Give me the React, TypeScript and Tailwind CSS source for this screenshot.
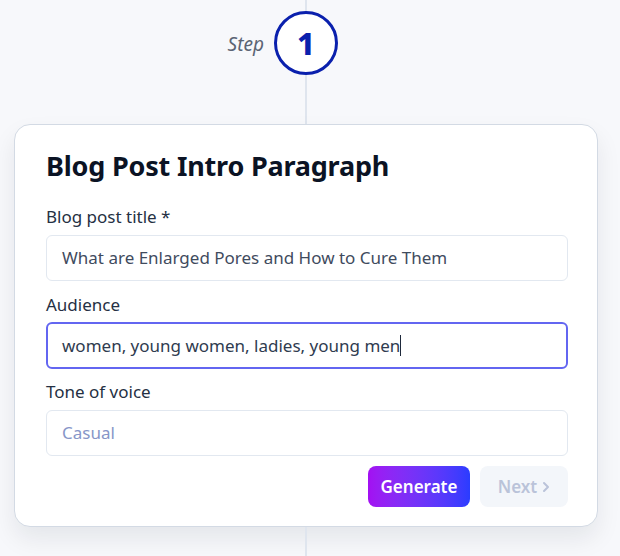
import React from "react";

export default function App() {
  const font = { fontFamily: '"Noto Sans", "Open Sans", sans-serif' };
  return (
    <div className="min-h-[556px] w-[620px] bg-[#f7f8fb] pl-[14px] pr-[22px] flex flex-col items-center" style={font}>
      <div className="flex flex-col items-center">
        <div className="w-[2px] h-[11px] bg-[#dfe5ee]" />
        <div className="relative w-[64px] h-[64px] rounded-full border-[3px] border-[#0a20ad] bg-white flex items-center justify-center">
          <span className="text-[31px] font-extrabold text-[#0a20ad] leading-none">1</span>
          <span className="absolute right-full mr-[13px] top-[18px] italic text-[19px] leading-[24px] text-[#5b6474]">Step</span>
        </div>
        <div className="w-[2px] h-[49px] bg-[#dfe5ee]" />
      </div>
      <div className="w-[584px] bg-white border border-[#d3dae4] rounded-[16px] shadow-[0_12px_24px_rgba(15,23,42,0.08)] pt-[23px] pb-[19px] pl-[31px] pr-[29px]">
        <h1 className="text-[27px] leading-[36px] font-bold text-[#0b1324] tracking-[-0.2px]">Blog Post Intro Paragraph</h1>
        <div className="mt-[21px] flex flex-col">
          <label className="text-[17px] leading-[24px] text-[#253043]">Blog post title *</label>
          <div className="mt-[6px] h-[46px] border border-[#e2e8f0] rounded-[6px] px-[15px] flex items-center text-[17px] text-[#3f4b5e]">
            What are Enlarged Pores and How to Cure Them
          </div>
          <label className="mt-[12px] text-[17px] leading-[24px] text-[#253043]">Audience</label>
          <div className="mt-[5px] h-[47px] border-2 border-[#6366f1] rounded-[6px] px-[14px] flex items-center text-[17px] text-[#2f3b4f]">
            women, young women, ladies, young men<span className="inline-block w-[1px] h-[21px] bg-[#1e293b]" />
          </div>
          <label className="mt-[11px] text-[17px] leading-[24px] text-[#253043]">Tone of voice</label>
          <div className="mt-[6px] h-[46px] border border-[#e2e8f0] rounded-[6px] px-[15px] flex items-center text-[17px] text-[#8796c8]">
            Casual
          </div>
          <div className="mt-[10px] flex justify-end gap-[10px]">
            <button className="w-[102px] h-[41px] rounded-[8px] bg-gradient-to-r from-[#a30ff2] to-[#2a3cff] text-white font-semibold text-[17px]">
              Generate
            </button>
            <button className="w-[88px] h-[41px] rounded-[8px] bg-[#f3f6fa] text-[#bac3d9] font-semibold text-[17px] flex items-center justify-center gap-[5px]">
              Next
              <svg width="8" height="12" viewBox="0 0 8 12" fill="none" stroke="#bac3d9" strokeWidth="2" strokeLinecap="round" strokeLinejoin="round">
                <path d="M2 2l4 4-4 4" />
              </svg>
            </button>
          </div>
        </div>
      </div>
      <div className="w-[2px] h-[30px] bg-[#dfe5ee]" />
    </div>
  );
}
